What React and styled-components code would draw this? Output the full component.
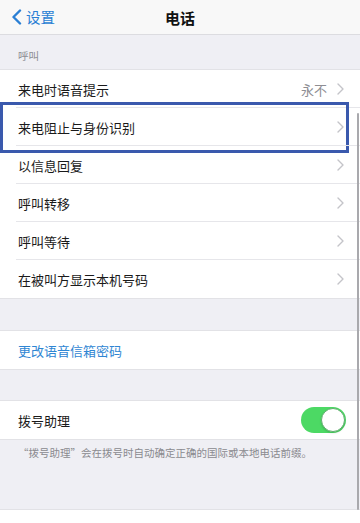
import React from "react";
import styled, { createGlobalStyle } from "styled-components";

const GlobalStyle = createGlobalStyle`
  html, body { margin: 0; padding: 0; }
  body {
    background: #efeff4;
    font-family: "Noto Sans CJK SC", "Noto Sans", "Liberation Sans", sans-serif;
    -webkit-font-smoothing: antialiased;
  }
`;

const Page = styled.div`
  position: relative;
  width: 360px;
  height: 523px;
  overflow: hidden;
  background: #efeff4;
  display: flex;
  flex-direction: column;
`;

const NavBar = styled.header`
  flex: none;
  height: 34px;
  background: #f8f8f8;
  border-bottom: 1px solid #dcdce0;
  display: grid;
  grid-template-columns: 1fr auto 1fr;
  align-items: center;
`;

const BackButton = styled.div`
  display: flex;
  align-items: center;
  gap: 4px;
  padding-left: 11px;
  color: #2a7fd4;
  font-size: 14.5px;
  line-height: 1;
`;

const Title = styled.div`
  font-size: 15px;
  font-weight: 700;
  color: #111;
  line-height: 1;
`;

const SectionHeader = styled.div`
  flex: none;
  height: 34px;
  box-sizing: border-box;
  padding: 0 18px 6px;
  display: flex;
  align-items: flex-end;
  font-size: 10.5px;
  color: #8c8c91;
`;

const Group = styled.div`
  flex: none;
  background: #fff;
  border-top: 1px solid #e2e2e6;
  border-bottom: 1px solid #e2e2e6;
`;

const Row = styled.div`
  position: relative;
  height: 38px;
  display: flex;
  align-items: center;
  padding: 0 16px 0 18px;
  font-size: 13px;
  color: ${(p) => (p.$link ? "#2f86d3" : "#1a1a1a")};
  &:not(:last-child)::after {
    content: "";
    position: absolute;
    left: 16px;
    right: 0;
    bottom: 0;
    height: 1px;
    background: #e6e6ea;
  }
`;

const Label = styled.span`
  flex: 1;
`;

const Value = styled.span`
  color: #8e8e93;
  font-size: 13px;
  margin-right: 10px;
`;

const Spacer = styled.div`
  flex: none;
  height: ${(p) => p.$h}px;
`;

const Footer = styled.div`
  flex: none;
  height: 69px;
  box-sizing: border-box;
  padding: 6px 18px 0;
  font-size: 10.5px;
  color: #8a8a8f;
  line-height: 1.4;
`;

const Highlight = styled.div`
  position: absolute;
  top: -6px;
  left: 0;
  right: 11px;
  bottom: -7px;
  border: 3px solid #3a59ad;
  pointer-events: none;
`;

const Toggle = styled.div`
  width: 45px;
  height: 26px;
  border-radius: 13px;
  background: #4cd964;
  position: relative;
  flex: none;
  margin-right: -2px;
  &::after {
    content: "";
    position: absolute;
    top: 1px;
    right: 1px;
    width: 22px;
    height: 22px;
    border-radius: 50%;
    background: #fff;
    border: 1px solid #5fae6e;
    box-shadow: 0 1px 2px rgba(0, 0, 0, 0.15);
  }
`;

const ScrollIndicator = styled.div`
  position: absolute;
  right: 1px;
  top: 113px;
  width: 2px;
  height: 397px;
  border-radius: 1px;
  background: #a9a9ad;
`;

const BackChevron = () => (
  <svg width="11" height="16" viewBox="0 0 11 16" fill="none">
    <path d="M9 1.5 L2.5 8 L9 14.5" stroke="#2a7fd4" strokeWidth="2.4" strokeLinecap="round" strokeLinejoin="round" />
  </svg>
);

const Chevron = () => (
  <svg width="7" height="12" viewBox="0 0 7 12" fill="none">
    <path d="M1 1 L6 6 L1 11" stroke="#c4c4c9" strokeWidth="1.4" strokeLinecap="round" strokeLinejoin="round" />
  </svg>
);

const callRows = [
  { label: "来电时语音提示", value: "永不" },
  { label: "来电阻止与身份识别", highlight: true },
  { label: "以信息回复" },
  { label: "呼叫转移" },
  { label: "呼叫等待" },
  { label: "在被叫方显示本机号码" },
];

export default function App() {
  return (
    <>
      <GlobalStyle />
      <Page>
        <NavBar>
          <BackButton>
            <BackChevron />
            <span>设置</span>
          </BackButton>
          <Title>电话</Title>
          <div />
        </NavBar>
        <SectionHeader>呼叫</SectionHeader>
        <Group>
          {callRows.map((r) => (
            <Row key={r.label}>
              <Label>{r.label}</Label>
              {r.value && <Value>{r.value}</Value>}
              <Chevron />
              {r.highlight && <Highlight />}
            </Row>
          ))}
        </Group>
        <Spacer $h={31} />
        <Group>
          <Row $link>
            <Label>更改语音信箱密码</Label>
          </Row>
        </Group>
        <Spacer $h={30} />
        <Group>
          <Row>
            <Label>拨号助理</Label>
            <Toggle />
          </Row>
        </Group>
        <Footer>“拨号助理”会在拨号时自动确定正确的国际或本地电话前缀。</Footer>
        <Group>
          <Row>
            <Label>SIM 卡 PIN 码</Label>
            <Chevron />
          </Row>
        </Group>
        <ScrollIndicator />
      </Page>
    </>
  );
}
